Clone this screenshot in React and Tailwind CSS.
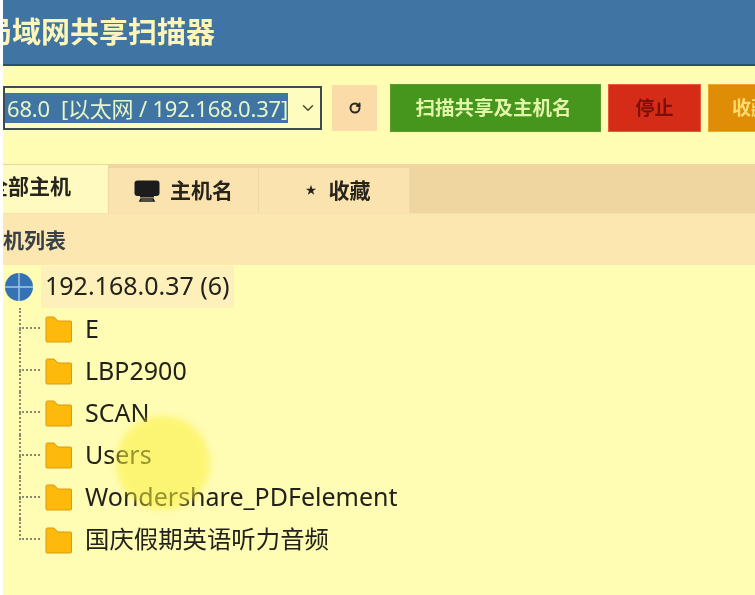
import { ChevronDown, RotateCw } from "lucide-react";

const cjk = "font-['Noto_Sans','Noto_Sans_CJK_SC',sans-serif]";

const shares = ["E", "LBP2900", "SCAN", "Users", "Wondershare_PDFelement", "国庆假期英语听力音频"];

function Folder() {
  return (
    <svg width="27" height="27" viewBox="0 0 27 27" className="shrink-0">
      <path d="M1 2.5 C1 1.5 1.5 1 2.5 1 H9 L13 5 H25.5 C26.2 5 26.5 5.4 26.5 6 V25 C26.5 25.7 26.1 26 25.5 26 H2 C1.4 26 1 25.6 1 25 Z" fill="#fdb90c" stroke="#d99a12" strokeWidth="1" />
    </svg>
  );
}

function Globe() {
  return (
    <svg width="28" height="28" viewBox="0 0 28 28" className="shrink-0">
      <circle cx="14" cy="14" r="14" fill="#3472b4" />
      <path d="M0 14 H28 M14 0 V28" stroke="#a9cbe0" strokeWidth="1.4" />
    </svg>
  );
}

function Monitor() {
  return (
    <svg width="26" height="22" viewBox="0 0 26 22">
      <rect x="0.5" y="0.5" width="25" height="15.5" rx="3" fill="#1c1c1c" />
      <path d="M7 19 H19 L20 21 H6 Z" fill="none" stroke="#1c1c1c" strokeWidth="1.6" />
      <rect x="6" y="15" width="14" height="2.5" fill="#1c1c1c" />
    </svg>
  );
}

function Row({ name, last }) {
  return (
    <div className="flex h-[42.2px] items-stretch">
      <div className="ml-[16px] flex w-[21px] shrink-0 flex-col">
        <div className="h-1/2 border-b-2 border-l-2 border-dotted border-[#8a8a70]" />
        {!last && <div className="h-1/2 border-l-2 border-dotted border-[#8a8a70]" />}
      </div>
      <div className="ml-[5px] flex items-center gap-[13px]">
        <Folder />
        <span className={`pb-[2px] leading-none whitespace-nowrap text-[#22221a] ${last ? "text-[24.4px]" : "text-[25px]"}`}>{name}</span>
      </div>
    </div>
  );
}

export default function App() {
  return (
    <div className={`relative h-[595px] w-[755px] overflow-hidden bg-white pl-[3px] blur-[0.5px] ${cjk}`}>
      <div className="flex h-full flex-col overflow-hidden bg-[#fffcb4]">
        <header className="flex h-[66px] shrink-0 items-center overflow-hidden border-b-2 border-[#2a5070] bg-[#3f74a3]">
          <h1 className="-ml-[20px] text-[29px] font-bold whitespace-nowrap text-[#fdf6b8]">局域网共享扫描器</h1>
        </header>

        <div className="flex h-[98px] shrink-0 items-center pb-[14px]">
          <div className="flex h-[44px] w-[319px] shrink-0 items-center justify-end overflow-hidden border-2 border-[#3b4a55] bg-[#fffcc0] pr-[3px]">
            <span className="flex h-[30px] items-center bg-[#3f74a3] pl-[4px] text-[22px] tracking-[-0.2px] whitespace-pre text-[#e6f6c8]">192.168.0  [以太网 / 192.168.0.37]</span>
            <ChevronDown size={18} strokeWidth={2} className="ml-[11px] shrink-0 text-[#4a4a3a]" />
          </div>
          <button className="ml-[10px] flex h-[46px] w-[45px] shrink-0 items-center justify-center bg-[#fbdca8]">
            <RotateCw size={12} strokeWidth={4} className="text-[#2a2a22]" />
          </button>
          <button className="ml-[13px] h-[48px] w-[211px] shrink-0 border border-[#5b9a2b] bg-[#46951c] pr-[4px] text-[19.5px] font-bold text-[#e2f5a8]">扫描共享及主机名</button>
          <button className="ml-[7px] h-[48px] w-[93px] shrink-0 border border-[#e85a3a] bg-[#d52c17] text-[19px] font-bold text-[#7d0f0a]">停止</button>
          <button className="ml-[7px] h-[48px] w-[80px] shrink-0 border border-[#eda52a] bg-[#df8d06] pl-[23px] text-left text-[19px] font-bold whitespace-nowrap text-[#ffdc70]">收藏夹</button>
        </div>

        <nav className="flex h-[50px] shrink-0 items-end overflow-hidden border-b border-[#f6e2ae] bg-[#efd5a0] text-[21px] font-bold text-[#26241c]">
          <div className="flex h-[48px] w-[105px] shrink-0 items-center justify-end bg-[#fffabf] pr-[37px] pb-[4px] whitespace-nowrap">全部主机</div>
          <div className="flex h-[45px] w-[151px] shrink-0 items-center justify-center gap-[10px] border-r border-l border-[#efd9a5] bg-[#fae3ae]">
            <Monitor />
            <span>主机名</span>
          </div>
          <div className="flex h-[45px] w-[151px] shrink-0 items-center justify-center gap-[12px] border-r border-[#efd9a5] bg-[#fae3ae] pl-[8px]">
            <span className="text-[11px]">★</span>
            <span>收藏</span>
          </div>
        </nav>

        <div className="flex h-[51px] shrink-0 items-center overflow-hidden bg-[#fce7b0] pt-[3px]">
          <span className="-ml-[21px] text-[21px] font-bold whitespace-nowrap text-[#3a4048]">主机列表</span>
        </div>

        <div className="flex h-[43px] shrink-0 items-center pl-[2px]">
          <Globe />
          <span className="ml-[8px] flex h-[42px] items-center bg-[#fdf0bb] px-[4px] pb-[2px] text-[25px] whitespace-nowrap text-[#22221a]">192.168.0.37 (6)</span>
        </div>
        <div className="flex flex-col">
          {shares.map((name, i) => (
            <Row key={name} name={name} last={i === shares.length - 1} />
          ))}
        </div>
      </div>

      {/* cursor highlight from the screen recording */}
      <div className="absolute top-[416px] left-[116px] h-[94px] w-[94px] rounded-full bg-[#fbf040] opacity-55 blur-[3px]" />
    </div>
  );
}
